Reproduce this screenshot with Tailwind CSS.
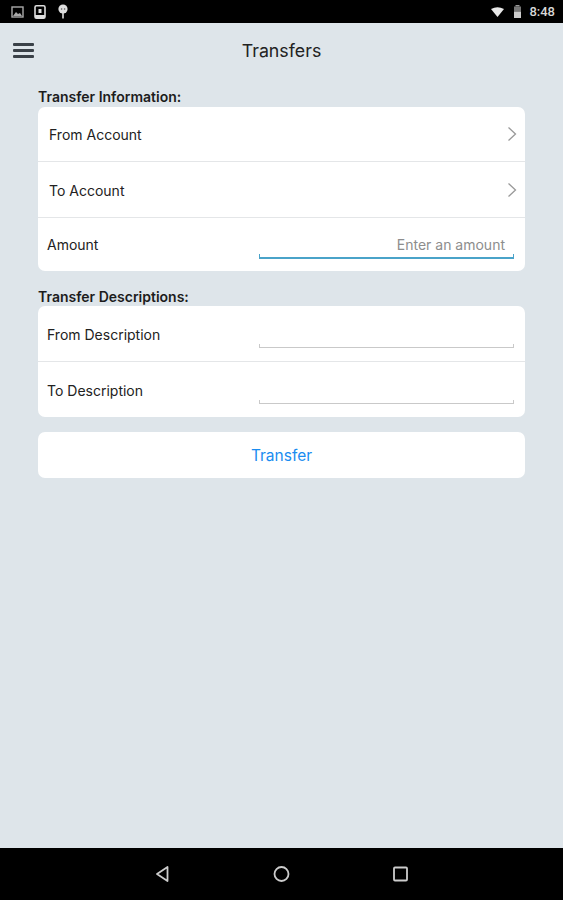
<!DOCTYPE html>
<html lang="en">
<head>
    <meta charset="UTF-8">
    <meta name="viewport" content="width=device-width, initial-scale=1.0">
    <title>Transfers</title>
    <script src="https://cdn.jsdelivr.net/npm/@tailwindcss/browser@4"></script>
</head>
<body class="h-[900px] w-[563px] overflow-hidden flex flex-col bg-[#dee5ea] font-['Inter',sans-serif] text-[#222]">
    <!-- Status bar -->
    <div class="h-[23px] bg-black flex items-center pl-[11px] pr-[8px] text-[#d8d8d8]">
        <svg class="w-[13px] h-[12px]" viewBox="0 0 13 12"><rect x="1" y="1" width="11" height="10" fill="none" stroke="#aaa" stroke-width="1.400"/><path d="M2 10 5 6l2 2 2-1 2 3z" fill="#aaa"/></svg>
        <svg class="w-[12px] h-[14px] ml-[10px]" viewBox="0 0 12 14"><rect x="1" y="0.800" width="10" height="12.400" rx="1.500" fill="none" stroke="#ddd" stroke-width="1.600"/><rect x="1" y="10" width="10" height="3" fill="#ddd"/><rect x="4.500" y="4" width="3" height="4" fill="#ddd"/></svg>
        <svg class="w-[12px] h-[15px] ml-[11px]" viewBox="0 0 12 15"><circle cx="6" cy="5" r="4.600" fill="#ddd"/><rect x="5.200" y="8" width="1.600" height="6.500" fill="#ddd"/><circle cx="4.600" cy="5" r=".8" fill="#555"/><circle cx="7.600" cy="5" r=".8" fill="#555"/></svg>
        <svg class="w-[13px] h-[10px] ml-auto" viewBox="0 0 13 10"><path d="M0 2Q6.500-1.500 13 2L6.500 10z" fill="#e8e8e8"/></svg>
        <svg class="w-[9px] h-[13px] ml-[9px]" viewBox="0 0 9 13"><rect x="2.500" y="0" width="4" height="1.500" fill="#999"/><rect x="1" y="1.500" width="7" height="5" fill="#777"/><rect x="1" y="6.500" width="7" height="6.500" fill="#ccc"/></svg>
        <span class="ml-[7px] text-[13px] font-['Roboto',sans-serif] font-medium leading-none">8:48</span>
    </div>

    <!-- Header -->
    <header class="relative h-[55px] flex items-center justify-center">
        <button class="absolute left-[13px] top-[20px] w-[21px] flex flex-col gap-[3.500px]">
            <span class="h-[2.500px] bg-[#3a4148] rounded-[1px]"></span>
            <span class="h-[2.500px] bg-[#3a4148] rounded-[1px]"></span>
            <span class="h-[2.500px] bg-[#3a4148] rounded-[1px]"></span>
        </button>
        <h1 class="text-[17.800px] leading-none font-normal">Transfers</h1>
    </header>

    <!-- Main -->
    <main class="flex-1 px-[38px] pt-[10px]">
        <h2 class="text-[14px] font-semibold leading-[18px] text-[#1c1c1c]">Transfer Information:</h2>
        <div class="mt-[1px] bg-white rounded-[7px] text-[14px] leading-none">
            <div class="h-[54px] pl-[11px] pr-[8px] flex items-center justify-between border-b border-[#e4e6e8] box-content">
                <span class="pt-[2px]">From Account</span>
                <svg class="w-[10px] h-[16px]" viewBox="0 0 10 16"><path d="M1.500 1.500 8.500 8l-7 6.500" fill="none" stroke="#999" stroke-width="1.300"/></svg>
            </div>
            <div class="h-[55px] pl-[11px] pr-[8px] flex items-center justify-between border-b border-[#e4e6e8] box-content">
                <span class="pt-[2px]">To Account</span>
                <svg class="w-[10px] h-[16px]" viewBox="0 0 10 16"><path d="M1.500 1.500 8.500 8l-7 6.500" fill="none" stroke="#999" stroke-width="1.300"/></svg>
            </div>
            <div class="h-[53px] pl-[9px] pr-[11px] flex items-start justify-between">
                <span class="mt-[20px]">Amount</span>
                <div class="w-[255px] h-[41px] flex items-end justify-end pr-[8px] pb-[5px] border-b-2 border-x border-[#4aa3c9] [border-image:linear-gradient(to_top,#4aa3c9_4px,transparent_4px)_1] text-[#8d8d8d]">Enter an amount</div>
            </div>
        </div>

        <h2 class="mt-[17px] text-[14px] font-semibold leading-[18px] text-[#1c1c1c]">Transfer Descriptions:</h2>
        <div class="bg-white rounded-[7px] text-[14px] leading-none">
            <div class="h-[55px] pl-[9px] pr-[11px] flex items-start justify-between border-b border-[#e4e6e8] box-content">
                <span class="mt-[22px]">From Description</span>
                <div class="w-[255px] h-[42px] border-b border-x border-[#c9c9c9] [border-image:linear-gradient(to_top,#c9c9c9_4px,transparent_4px)_1]"></div>
            </div>
            <div class="h-[55px] pl-[9px] pr-[11px] flex items-start justify-between">
                <span class="mt-[22px]">To Description</span>
                <div class="w-[255px] h-[42px] border-b border-x border-[#c9c9c9] [border-image:linear-gradient(to_top,#c9c9c9_4px,transparent_4px)_1]"></div>
            </div>
        </div>

        <button class="mt-[15px] w-full h-[46px] pt-[2px] bg-white rounded-[7px] text-[15.500px] text-[#1a8cf0]">Transfer</button>
    </main>

    <!-- Navigation bar -->
    <nav class="h-[52px] bg-black flex items-center justify-center gap-[98px] pb-[1px]">
        <svg class="w-[21px] h-[20px]" viewBox="0 0 21 20"><path d="M15.500 3 5 10l10.500 7z" fill="none" stroke="#ccc" stroke-width="1.800" stroke-linejoin="round"/></svg>
        <svg class="w-[21px] h-[20px]" viewBox="0 0 21 20"><circle cx="10.500" cy="10" r="7" fill="none" stroke="#ccc" stroke-width="1.800"/></svg>
        <svg class="w-[21px] h-[20px]" viewBox="0 0 21 20"><rect x="4" y="3.500" width="13" height="13" rx="1" fill="none" stroke="#ccc" stroke-width="1.800"/></svg>
    </nav>
</body>
</html>
